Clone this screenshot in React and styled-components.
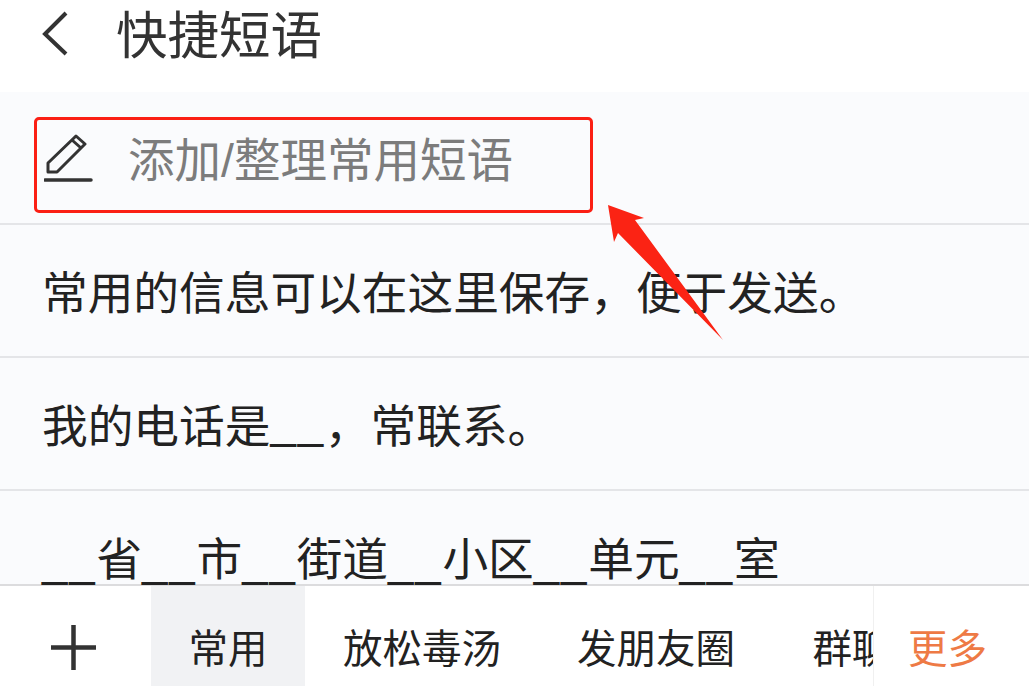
import React from 'react';
import styled, { createGlobalStyle } from 'styled-components';

const GlobalStyle = createGlobalStyle`
  html, body {
    margin: 0;
    padding: 0;
    background: #fff;
  }
  body {
    font-family: "Liberation Sans", "Noto Sans CJK SC", sans-serif;
  }
`;

const Page = styled.div`
  position: relative;
  width: 1029px;
  height: 686px;
  overflow: hidden;
  display: flex;
  flex-direction: column;
  background: #fafbfd;
`;

const Header = styled.header`
  height: 92px;
  flex: none;
  display: flex;
  align-items: flex-start;
  gap: 41px;
  padding: 9px 0 0 41px;
  box-sizing: border-box;
  background: #fff;
`;

const BackIcon = styled.svg`
  width: 34px;
  height: 46px;
  margin-top: 1px;
`;

const Title = styled.h1`
  margin: 1px 0 0;
  font-size: 51.5px;
  line-height: 52px;
  font-weight: 400;
  color: #333;
`;

const List = styled.div`
  flex: 1;
  min-height: 0;
  overflow: hidden;
`;

const Row = styled.div`
  height: 133px;
  box-sizing: border-box;
  display: flex;
  align-items: center;
  padding: 0 0 2px 42px;
  border-bottom: 2px solid #e4e5e8;
  font-size: 45.7px;
  color: #222;
  white-space: nowrap;
`;

const LastRow = styled(Row)`
  height: 95px;
  border-bottom: 2px solid #dcdcde;
  align-items: flex-start;
  padding-top: 41px;
  line-height: 58px;
`;

const AddRow = styled(Row)`
  display: block;
  padding: 25px 0 0 34px;
`;

const AddBox = styled.div`
  width: 559px;
  height: 96px;
  box-sizing: border-box;
  display: flex;
  align-items: center;
  gap: 34px;
  padding: 0 0 12px 7px;
  border: 3px solid #fb1f14;
  border-radius: 5px;
`;

const PencilIcon = styled.svg`
  width: 50px;
  height: 50px;
  flex: none;
`;

const Placeholder = styled.span`
  font-size: 46.5px;
  color: #7c7c7c;
  margin-top: -5px;
`;

const Blank = styled.span`
  letter-spacing: 1.8px;
`;

const TabBar = styled.nav`
  position: relative;
  height: 100px;
  flex: none;
  display: flex;
  align-items: stretch;
  background: #fff;
  overflow: hidden;
`;

const PlusBox = styled.div`
  width: 151px;
  flex: none;
  display: flex;
  align-items: center;
  padding: 22px 0 0 50px;
  box-sizing: border-box;
`;

const PlusIcon = styled.svg`
  width: 47px;
  height: 47px;
`;

const Tab = styled.div`
  flex: none;
  display: flex;
  align-items: center;
  justify-content: center;
  padding-top: 18px;
  box-sizing: border-box;
  width: ${p => p.$width}px;
  font-size: 39.5px;
  color: #222;
  white-space: nowrap;
  background: ${p => (p.$active ? '#f1f2f4' : 'transparent')};
`;

const More = styled.div`
  position: absolute;
  top: 0;
  right: 0;
  bottom: 0;
  width: 156px;
  box-sizing: border-box;
  padding: 18px 0 0 34px;
  display: flex;
  align-items: center;
  font-size: 39.5px;
  color: #ee7a45;
  background: #fff;
  border-left: 1px solid #f0f0f0;
`;

const Arrow = styled.svg`
  position: absolute;
  left: 600px;
  top: 200px;
  width: 130px;
  height: 145px;
`;

const tabs = [
  { label: '常用', width: 154, active: true },
  { label: '放松毒汤', width: 234 },
  { label: '发朋友圈', width: 234 },
  { label: '群聊', width: 158 },
];

export default function App() {
  return (
    <Page>
      <GlobalStyle />
      <Header>
        <BackIcon viewBox="0 0 34 46">
          <path d="M25 3 L4 24 L25 44" fill="none" stroke="#333" strokeWidth="4" />
        </BackIcon>
        <Title>快捷短语</Title>
      </Header>
      <List>
        <AddRow>
          <AddBox>
            <PencilIcon viewBox="0 0 50 50">
              <path d="M4 38 L4 29 L32 2 L41 10 L13 38 Z M28 6 L37 14" fill="none" stroke="#333" strokeWidth="3" strokeLinejoin="round" />
              <path d="M1 46 H47" stroke="#333" strokeWidth="3.5" strokeLinecap="round" />
            </PencilIcon>
            <Placeholder>添加/整理常用短语</Placeholder>
          </AddBox>
        </AddRow>
        <Row>常用的信息可以在这里保存，便于发送。</Row>
        <Row>我的电话是<Blank>__</Blank>，常联系。</Row>
        <LastRow>
          <span>
            <Blank>__</Blank>省<Blank>__</Blank>市<Blank>__</Blank>街道<Blank>__</Blank>小区<Blank>__</Blank>单元<Blank>__</Blank>室
          </span>
        </LastRow>
      </List>
      <TabBar>
        <PlusBox>
          <PlusIcon viewBox="0 0 47 47">
            <path d="M23.5 1 V46 M1 23.5 H46" stroke="#333" strokeWidth="4.5" />
          </PlusIcon>
        </PlusBox>
        {tabs.map(t => (
          <Tab key={t.label} $width={t.width} $active={t.active}>{t.label}</Tab>
        ))}
        <More>更多</More>
      </TabBar>
      <Arrow viewBox="0 0 130 145">
        <polygon points="8,5 44,18 35,20 123,140 18,33 14,42" fill="#fb2314" />
      </Arrow>
    </Page>
  );
}
